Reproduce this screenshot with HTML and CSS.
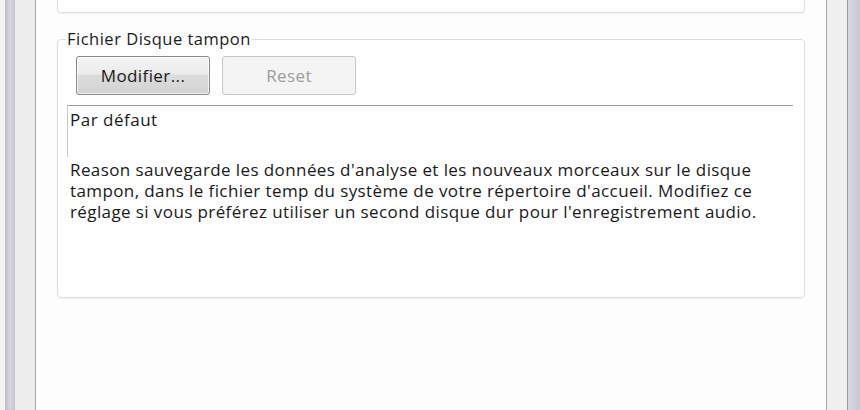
FILE: index.html
```html
<!DOCTYPE html>
<html lang="fr">
<head>
<meta charset="utf-8">
<title>Fichier Disque tampon</title>
<link rel="stylesheet" href="styles.css">
</head>
<body>
<div class="frame">
  <div class="left-rail">
    <div class="rail-gap"></div>
    <div class="rail-bar"></div>
    <div class="rail-band"></div>
  </div>
  <main class="content">
    <div class="top-panel"></div>
    <fieldset class="group">
      <legend class="group-label">Fichier Disque tampon</legend>
      <div class="buttons">
        <button class="btn">Modifier...</button>
        <button class="btn btn-disabled" disabled>Reset</button>
      </div>
      <div class="path-field">Par défaut</div>
      <p class="desc">Reason sauvegarde les données d'analyse et les nouveaux morceaux sur le disque tampon, dans le fichier temp du système de votre répertoire d'accueil. Modifiez ce réglage si vous préférez utiliser un second disque dur pour l'enregistrement audio.</p>
    </fieldset>
  </main>
  <div class="right-rail">
    <div class="rail-band-r"></div>
    <div class="rail-bar-r"></div>
  </div>
</div>
</body>
</html>
```

FILE: styles.css
```css
html, body {
  margin: 0;
  padding: 0;
  background: #fdfdfd;
}
body {
  width: 860px;
  height: 410px;
  overflow: hidden;
  font-family: "Open Sans", "Noto Sans", sans-serif;
  color: #222;
}
.frame {
  display: flex;
  height: 410px;
}
.left-rail {
  display: flex;
  width: 35px;
  border-right: 1px solid #a9a9a9;
  flex: none;
}
.rail-gap {
  width: 5px;
  background: #f4f4f4;
}
.rail-bar {
  width: 10px;
  background: linear-gradient(90deg, #bcbcc6 0%, #d6d6e6 50%, #c4c4cc 100%);
}
.rail-band {
  flex: 1;
  background: #ededed;
}
.content {
  flex: 1;
  padding: 0 21px;
  display: flex;
  flex-direction: column;
}
.top-panel {
  height: 12px;
  border: 1px solid #dedede;
  border-top: none;
  border-radius: 0 0 4px 4px;
  background: #fefefe;
  box-shadow: 0 1px 1px rgba(0,0,0,0.04);
}
.group {
  margin: 16px 0 0 0;
  padding: 7px 10px 0 9px;
  height: 260px;
  border: 1px solid #dcdcdc;
  border-radius: 4px;
  box-shadow: 0 1px 2px rgba(0,0,0,0.06);
  background: #fefefe;
}
.group-label {
  padding: 0 1px;
  margin-left: -1px;
  font-size: 16.5px;
  letter-spacing: 0.5px;
  line-height: 20px;
  color: #1c1c1c;
}
.buttons {
  display: flex;
  gap: 12px;
  padding-left: 9px;
}
.btn {
  width: 134px;
  height: 39px;
  font-family: inherit;
  font-size: 17px;
  letter-spacing: 0.4px;
  color: #1a1a1a;
  border: 1px solid #8a8a8a;
  border-radius: 3px;
  background: linear-gradient(#f4f4f4 0%, #ececec 45%, #dcdcdc 50%, #d2d2d2 100%);
  box-shadow: inset 0 0 0 1px rgba(255,255,255,0.7);
  padding: 0;
}
.btn-disabled {
  color: #9c9c9c;
  border-color: #c6c6c6;
  background: #f4f4f4;
  box-shadow: none;
}
.path-field {
  margin-top: 10px;
  height: 48px;
  border-top: 1px solid #9c9c9c;
  border-left: 1px solid #c8c8c8;
  margin-right: 1px;
  padding: 3px 2px 0 2px;
  font-size: 17px;
  letter-spacing: 0.5px;
  line-height: 21px;
  color: #1a1a1a;
}
.desc {
  margin: 2px 0 0 3px;
  font-size: 17px;
  letter-spacing: 0.4px;
  line-height: 21px;
  color: #1a1a1a;
  width: 705px;
}
.right-rail {
  flex: none;
  width: 33px;
  display: flex;
  border-left: 1px solid #a9a9a9;
}
.rail-band-r {
  width: 20px;
  background: #f0f0f0;
  border-right: 1px solid #9a9a9a;
}
.rail-bar-r {
  flex: 1;
  background: linear-gradient(90deg, #d8d8e0, #c8c8d2);
}
```
